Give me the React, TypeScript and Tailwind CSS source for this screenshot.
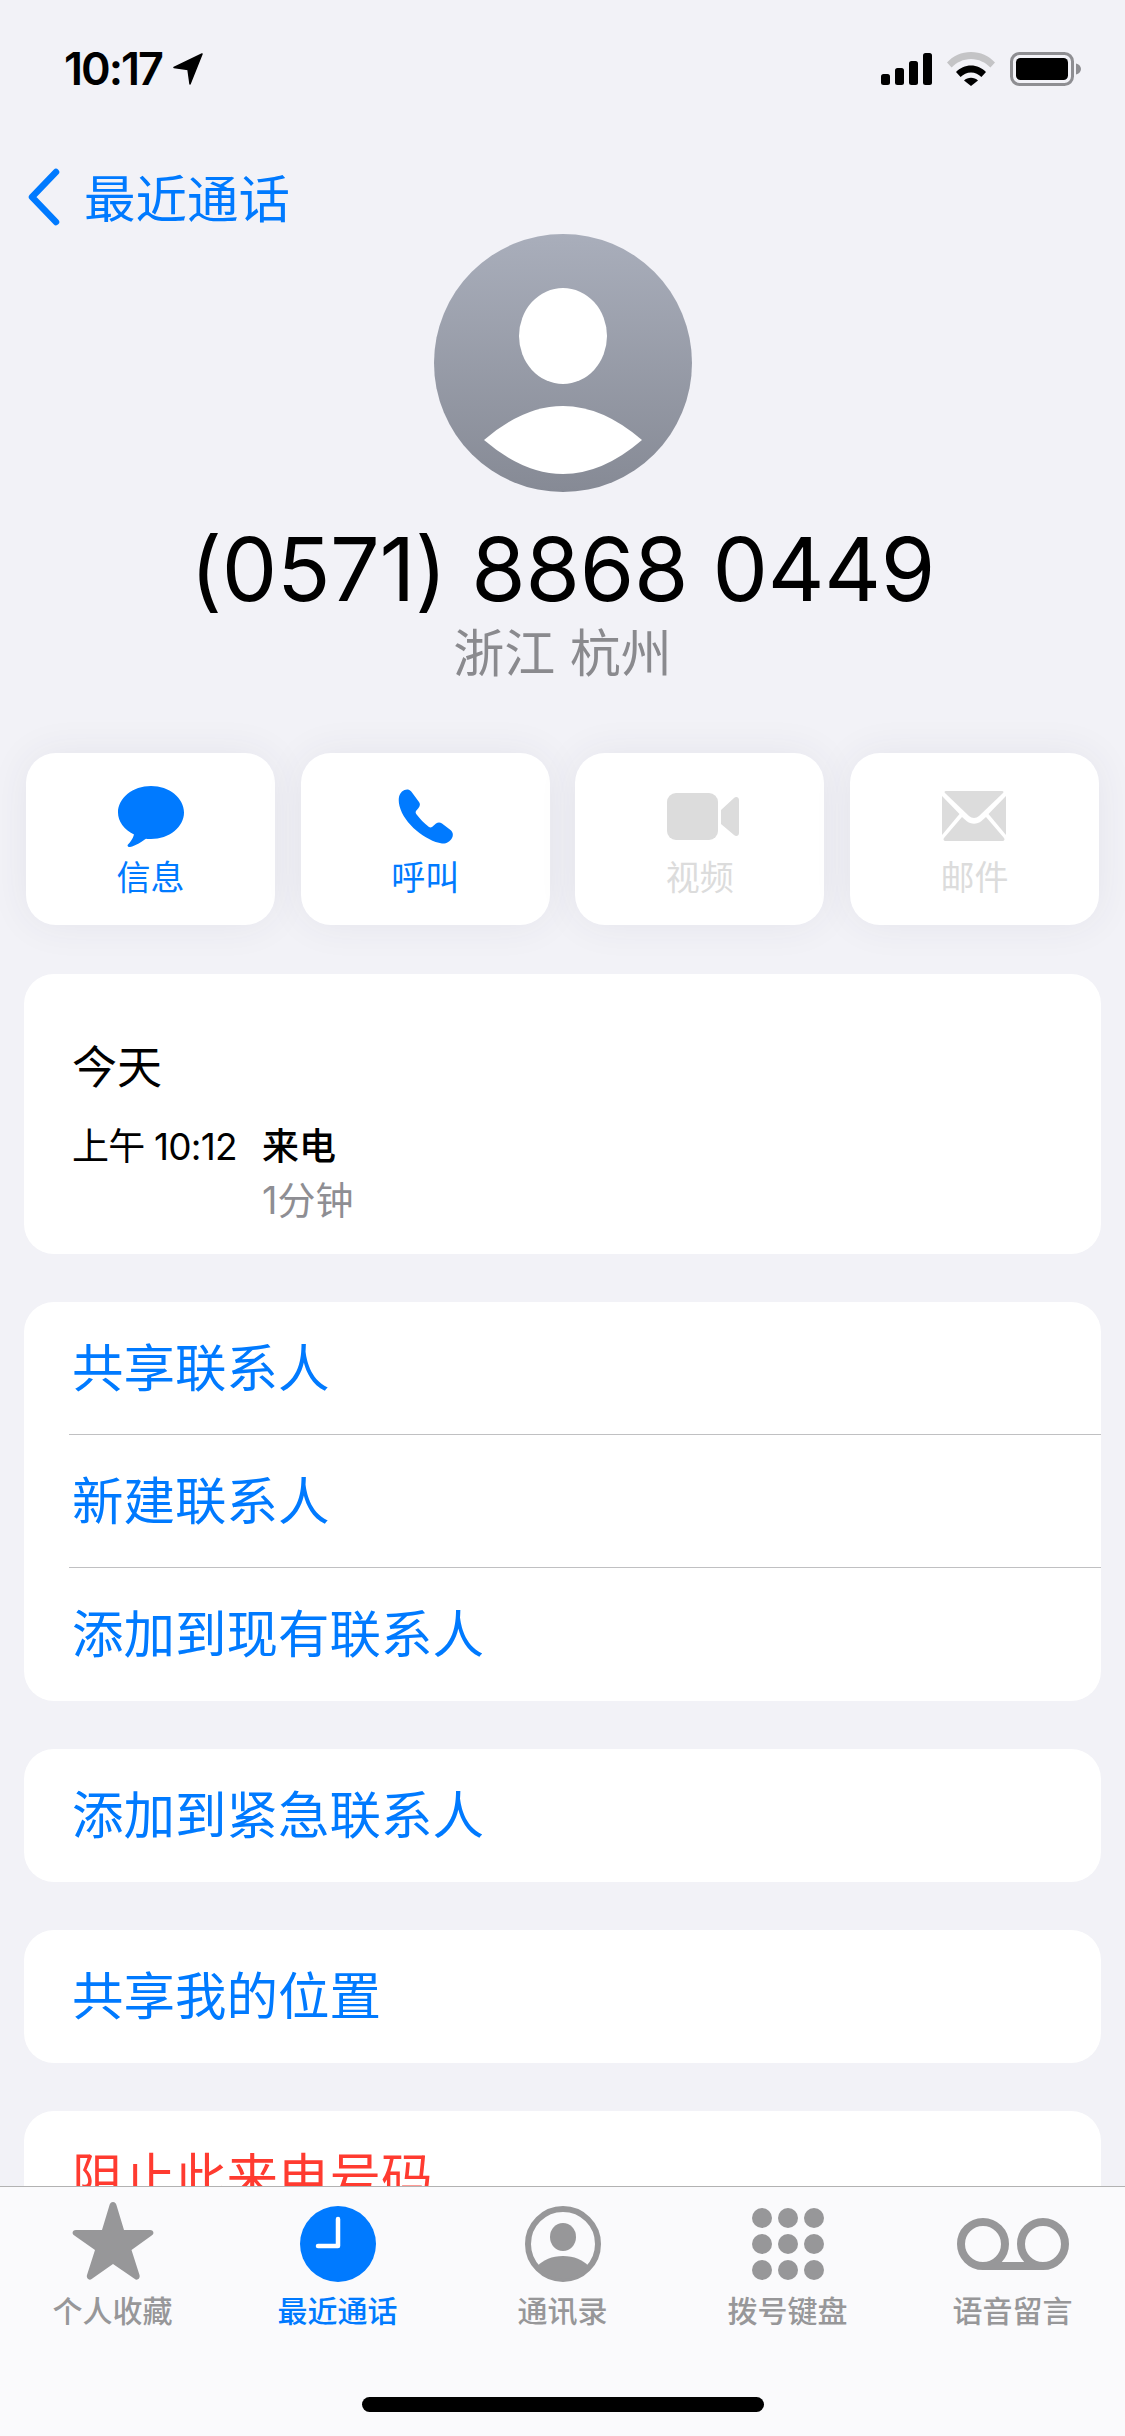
const cjk = { fontFamily: 'Inter, "Noto Sans CJK SC", sans-serif' };

function Signal() {
  return (
    <svg width="51" height="32" viewBox="0 0 51 32" fill="#000">
      <rect x="0" y="21" width="9" height="11" rx="2.5" />
      <rect x="14" y="15" width="9" height="17" rx="2.5" />
      <rect x="28" y="8" width="9" height="24" rx="2.5" />
      <rect x="42" y="0" width="9" height="32" rx="2.5" />
    </svg>
  );
}

function Wifi() {
  return (
    <svg width="48" height="34" viewBox="0 0 48 34">
      <path d="M0 10.5C6 4 14.5 0 24 0s18 4 24 10.5l-4.6 5C38.500 10.500 31.700 7 24 7S9.500 10.500 4.600 15.500Z" fill="#c4c4c6" />
      <path d="M9 20C13 16 18.200 13.500 24 13.500S35 16 39 20l-4.600 5C31.700 22.300 28 20.500 24 20.500S16.300 22.300 13.600 25Z" fill="#000" />
      <path d="M17 28.500C18.900 26.700 21.300 25.800 24 25.800s5.100.9 7 2.700L24 34Z" fill="#000" />
    </svg>
  );
}

function Battery() {
  return (
    <svg width="72" height="34" viewBox="0 0 72 34">
      <rect x="1.500" y="1.500" width="61" height="31" rx="8" fill="none" stroke="#8e8e92" strokeWidth="3" />
      <rect x="6" y="6" width="52" height="22" rx="4.500" fill="#000" />
      <path d="M66 11.500c3 .8 5 2.900 5 5.500s-2 4.700-5 5.500Z" fill="#8e8e92" />
    </svg>
  );
}

function Avatar() {
  return (
    <svg width="258" height="258" viewBox="0 0 258 258">
      <defs>
        <linearGradient id="avatarFill" x1="0" y1="0" x2="0" y2="1">
          <stop offset="0" stopColor="#a9aebb" />
          <stop offset="1" stopColor="#868a95" />
        </linearGradient>
      </defs>
      <circle cx="129" cy="129" r="129" fill="url(#avatarFill)" />
      <ellipse cx="129" cy="102" rx="44" ry="48" fill="#fff" />
      <path d="M50 206Q129 138 208 206Q129 274 50 206Z" fill="#fff" />
    </svg>
  );
}

function ActionButton({ label, active, icon }: { label: string; active?: boolean; icon: React.ReactNode }) {
  return (
    <div className="w-[249px] h-[172px] rounded-[30px] bg-white flex flex-col items-center shadow-[0_0_40px_rgba(60,60,90,0.07)]">
      <div className="h-[103px] w-full flex items-center justify-center pt-[23px]">{icon}</div>
      <div className={`text-[34px] leading-[43px] ${active ? "text-[#007aff]" : "text-[#dcdcdc]"}`} style={cjk}>
        {label}
      </div>
    </div>
  );
}

function Row({ text, color = "text-[#007aff]", border }: { text: string; color?: string; border?: boolean }) {
  return (
    <div className="pl-[45px]">
      <div className={`h-[133px] flex items-center pl-[3px] pt-[1px] text-[51.5px] ${color} ${border ? "border-b border-[#c0c0c2]" : ""}`} style={cjk}>
        {text}
      </div>
    </div>
  );
}

function Card({ children }: { children: React.ReactNode }) {
  return <div className="mx-[24px] rounded-[30px] bg-white overflow-hidden">{children}</div>;
}

function TabItem({ label, active, icon }: { label: string; active?: boolean; icon: React.ReactNode }) {
  return (
    <div className="flex-1 flex flex-col items-center">
      <div className="h-[97px] flex items-center justify-center pb-[1px]">{icon}</div>
      <div className={`text-[30px] leading-[36px] font-medium ${active ? "text-[#007aff]" : "text-[#979799]"}`} style={cjk}>
        {label}
      </div>
    </div>
  );
}

export default function App() {
  return (
    <div className="relative w-[1125px] h-[2436px] overflow-hidden bg-[#f2f2f7]" style={cjk}>
      <div className="h-[134px] flex justify-between items-start pt-[42px] pl-[64px] pr-[43px]">
        <div className="flex items-center gap-[11px]">
          <span className="text-[45px] leading-[54px] font-semibold tracking-[-2px] text-black">10:17</span>
          <svg width="30" height="32" viewBox="0 0 30 32" fill="#000" stroke="#000" strokeWidth="1.500" strokeLinejoin="round">
            <path d="M29 1 1 14.500 15 16.500 17 31Z" />
          </svg>
        </div>
        <div className="flex items-center gap-[15px] h-[54px]">
          <Signal />
          <Wifi />
          <Battery />
        </div>
      </div>

      <div className="h-[100px] flex items-start pl-[27px] pt-[34px] text-[#007aff]">
        <svg width="34" height="58" viewBox="0 0 34 58" fill="none" stroke="#007aff" strokeWidth="6.500" strokeLinecap="round" strokeLinejoin="round">
          <path d="M29 4 5 29l24 25" />
        </svg>
        <span className="ml-[23px] mt-[1px] text-[51.5px] leading-[60px]">最近通话</span>
      </div>

      <div className="flex flex-col items-center">
        <Avatar />
        <div className="mt-[27px] text-[88px] leading-[100px] text-black tracking-[-0.3px]">(0571) 8868 0449</div>
        <div className="mt-[3px] text-[51px] leading-[64px] text-[#8a8a8e]">浙江 杭州</div>
      </div>

      <div className="mt-[67px] px-[26px] flex justify-between">
        <ActionButton
          label="信息"
          active
          icon={
            <svg width="66" height="61" viewBox="0 0 66 61" fill="#007aff">
              <path d="M33 0C51.200 0 66 11.900 66 26.500S51.200 53 33 53c-2 0-3 0-5-.3C24 55.500 18 59.500 12 61c-2.400.5-3-1.500-2-2.500 2.500-2.500 5-6 6-10C6 43.500 0 35.500 0 26.500 0 11.900 14.800 0 33 0Z" />
            </svg>
          }
        />
        <ActionButton
          label="呼叫"
          active
          icon={
            <svg width="55" height="55" viewBox="0 0 55 55" fill="#007aff">
              <path d="M1 8C2 3 6 0 10 .5 12 1 13 2 14 3.500L21 13C22.500 15 22 17 20.500 19L18 22C17.500 23 17.500 24 18.200 25 22 30 26 34 31 38 32 38.600 33 38.500 34 38L38 34.500C40 33 42 33 44 34.500L52.500 41C55 43 55.500 46 54 49 52 52.500 48 55 44 54.500 28 52 6 35 1.500 17 .7 13.500 .5 11 1 8Z" />
            </svg>
          }
        />
        <ActionButton
          label="视频"
          icon={
            <svg width="72" height="47" viewBox="0 0 72 47" fill="#dcdcdc" className="ml-[7px]">
              <rect x="0" y="0" width="51" height="47" rx="9" />
              <path d="M54 17 67 5c2-2 5-1 5 2v33c0 3-3 4-5 2L54 31Z" />
            </svg>
          }
        />
        <ActionButton
          label="邮件"
          icon={
            <svg width="64" height="50" viewBox="0 0 64 50" fill="#dcdcdc">
              <path d="M4 0h56c1.500 0 2 1 1 2L37 25c-3 2.600-7 2.600-10 0L3 2C2 1 2.500 0 4 0Z" />
              <path d="M0 5 17.500 23 0 44Z" />
              <path d="M64 5 46.500 23 64 44Z" />
              <path d="M20 26l4.500 4c4.500 3.500 10.500 3.500 15 0l4.500-4L62 47c1 1.500.5 3-1.500 3h-57c-2 0-2.500-1.500-1.500-3Z" />
            </svg>
          }
        />
      </div>

      <div className="mt-[49px] flex flex-col gap-[48px]">
        <Card>
          <div className="h-[280px] pl-[48px] pt-[66px]">
            <div className="text-[45px] leading-[56px] text-black">今天</div>
            <div className="mt-[26px] flex text-[37px] leading-[50px] text-black">
              <div className="w-[190px] tracking-[-0.8px]">上午 10:12</div>
              <div className="flex flex-col">
                <span className="font-medium">来电</span>
                <span className="mt-[3px] text-[38px] text-[#8e8e93]">1分钟</span>
              </div>
            </div>
          </div>
        </Card>

        <Card>
          <Row text="共享联系人" border />
          <Row text="新建联系人" border />
          <Row text="添加到现有联系人" />
        </Card>

        <Card>
          <Row text="添加到紧急联系人" />
        </Card>

        <Card>
          <Row text="共享我的位置" />
        </Card>

        <Card>
          <Row text="阻止此来电号码" color="text-[#ff3b30]" />
        </Card>
      </div>

      <div className="absolute left-0 right-0 bottom-0 h-[250px] bg-[#fafafc] border-t border-[#b2b2b2] flex items-start pt-[9px]">
        <TabItem
          label="个人收藏"
          icon={
            <svg width="82" height="78" viewBox="0 0 82 78" fill="#979799" className="mb-[7px]">
              <path d="M41 0c2 0 3 1.500 3.600 3.500L52 28h26c3.500 0 4.600 3.300 2 5.200L59.500 48l8 25c1 3.500-2.200 6-5 3.800L41 62 20 76.800c-3 2.200-6-.3-5-3.800l8-25L2 33.200c-2.600-1.900-1.500-5.200 2-5.200h26l7.400-24.500C38 1.500 39 0 41 0Z" />
            </svg>
          }
        />
        <TabItem
          label="最近通话"
          active
          icon={
            <svg width="76" height="76" viewBox="0 0 76 76">
              <circle cx="38" cy="38" r="38" fill="#007aff" />
              <path d="M38 13v27H18" fill="none" stroke="#fff" strokeWidth="4.500" strokeLinecap="round" strokeLinejoin="round" />
            </svg>
          }
        />
        <TabItem
          label="通讯录"
          icon={
            <svg width="76" height="76" viewBox="0 0 76 76">
              <circle cx="38" cy="38" r="35" fill="none" stroke="#979799" strokeWidth="6" />
              <ellipse cx="38" cy="31" rx="13" ry="14" fill="#979799" />
              <path d="M12.500 60C18 54 27 50 38 50s20 4 25.500 10C57 68 48 73 38 73s-19-5-25.500-13Z" fill="#979799" />
            </svg>
          }
        />
        <TabItem
          label="拨号键盘"
          icon={
            <svg width="72" height="72" viewBox="0 0 72 72" fill="#979799">
              <circle cx="10" cy="10" r="10" />
              <circle cx="36" cy="10" r="10" />
              <circle cx="62" cy="10" r="10" />
              <circle cx="10" cy="36" r="10" />
              <circle cx="36" cy="36" r="10" />
              <circle cx="62" cy="36" r="10" />
              <circle cx="10" cy="62" r="10" />
              <circle cx="36" cy="62" r="10" />
              <circle cx="62" cy="62" r="10" />
            </svg>
          }
        />
        <TabItem
          label="语音留言"
          icon={
            <svg width="112" height="52" viewBox="0 0 112 52" fill="none" stroke="#979799" strokeWidth="8">
              <circle cx="26" cy="26" r="22" />
              <circle cx="86" cy="26" r="22" />
              <path d="M26 48h60" />
            </svg>
          }
        />
      </div>

      <div className="absolute left-[362px] top-[2397px] w-[402px] h-[15px] rounded-full bg-black" />
    </div>
  );
}
